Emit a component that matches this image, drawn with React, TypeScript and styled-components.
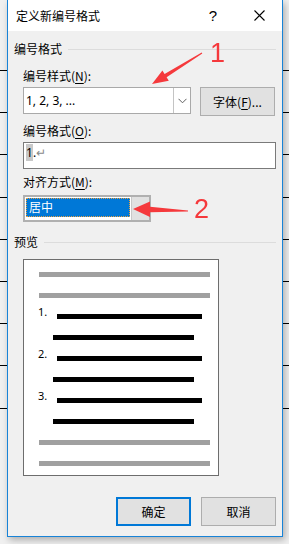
import React from 'react';
import styled, {createGlobalStyle} from 'styled-components';

const GlobalStyle = createGlobalStyle`
  html, body { margin: 0; padding: 0; }
  body {
    width: 289px; height: 544px; overflow: hidden;
    background-color: #f0f0f0;
    background-image: repeating-linear-gradient(to bottom, #000 0 1px, transparent 1px 42.2px);
    background-size: 100% 340px;
    background-position: 0 70px;
    background-repeat: no-repeat;
    font-family: "Noto Sans CJK SC", "Noto Sans", sans-serif;
    font-size: 12px;
    color: #000;
  }
  u { text-decoration-thickness: 1px; text-underline-offset: 2px; }
`;

const Dialog = styled.div`
  position: relative;
  margin-left: 7px;
  width: 276px; height: 537px;
  box-sizing: border-box;
  border: 1px solid #1883d7; border-top: none;
  background: #f0f0f0;
  box-shadow: 2px 3px 7px rgba(0, 0, 0, 0.28);
  display: flex; flex-direction: column;
`;

const TitleBar = styled.div`
  display: flex; align-items: center;
  height: 31px; background: #fff;
  padding-left: 8px;
  .title { flex: 1; line-height: 16px; }
`;

const TitleButton = styled.div`
  width: 46px; height: 31px;
  display: flex; align-items: center; justify-content: center;
  font-family: "Liberation Sans", sans-serif; font-size: 15px;
`;

const Body = styled.div`
  display: flex; flex-direction: column;
  padding: 10px 6px 0 6px;
`;

const GroupHeader = styled.div<{ $mt?: number }>`
  display: flex; align-items: center;
  margin-top: ${p => p.$mt ?? 0}px;
  line-height: 16px;
  &::after { content: ''; flex: 1; height: 1px; background: #dcdcdc; margin-left: 6px; }
`;

const Section = styled.div`
  display: flex; flex-direction: column;
  padding-left: 9px;
`;

const Label = styled.div<{ $mt: number }>`
  line-height: 16px;
  margin-top: ${p => p.$mt}px;
`;

const Row = styled.div`
  display: flex; align-items: flex-start; gap: 9px;
  margin-top: 3px; height: 28px;
`;

const Combo = styled.div`
  display: flex; box-sizing: border-box;
  width: 168px; height: 27px;
  border: 1px solid #a9a9a9; background: #fff;
  .value { flex: 1; padding-left: 2px; line-height: 25px; font-family: "Noto Sans", sans-serif; font-size: 12px; }
  .drop { width: 16px; border-left: 1px solid #c4c4c4; display: flex; align-items: center; justify-content: center; }
`;

const Button = styled.div<{ $primary?: boolean }>`
  box-sizing: border-box;
  width: 75px; height: 29px;
  display: flex; align-items: center; justify-content: center;
  background: #e1e1e1;
  border: ${p => (p.$primary ? '2px solid #0078d7' : '1px solid #adadad')};
`;

const TextInput = styled.div`
  box-sizing: border-box;
  margin-top: 3px; width: 253px; height: 27px;
  border: 1px solid #7a7a7a; background: #fff;
  padding: 1px 0 0 2px;
  font-family: "Noto Sans", sans-serif; font-size: 12px; line-height: 17px;
  .sel { background: #c8c8c8; }
  .mark { color: #8a8a8a; }
`;

const Select = styled.div`
  box-sizing: border-box;
  display: flex;
  margin-top: 5px; width: 128px; height: 27px;
  border: 2px solid #b0b0b0; background: #fff;
  .field { flex: 1; padding: 1px; }
  .chosen {
    box-sizing: border-box; height: 19px;
    background: #0078d7; color: #fff;
    border: 1px dotted #e8a040;
    padding-left: 2px; line-height: 16px;
  }
  .drop { width: 17px; background: #e1e1e1; border-left: 1px solid #c8c8c8; }
`;

const Preview = styled.div`
  box-sizing: border-box;
  margin-top: 9px; width: 196px; height: 217px;
  border: 1px solid #6d6d6d; background: #fff;
  padding: 12px 0 0 15px;
  display: flex; flex-direction: column; gap: 16px;
`;

const Bar = styled.div<{ $w: number; $ml?: number; $dark?: boolean }>`
  width: ${p => p.$w}px; height: 5px;
  margin-left: ${p => p.$ml ?? 0}px;
  background: ${p => (p.$dark ? '#000' : '#a0a0a0')};
`;

const NumRow = styled.div`
  display: flex; align-items: flex-start; height: 5px;
  .num {
    width: 19px; margin: -8px 0 0 -1px;
    font-family: "Noto Sans", sans-serif; font-size: 11px; line-height: 12px;
  }
`;

const Footer = styled.div`
  display: flex; gap: 10px; margin: 21px 0 0 102px;
`;

const Overlay = styled.svg`
  position: fixed; left: 0; top: 0;
  pointer-events: none;
`;

const Chevron = () => (
  <svg width="9" height="6" viewBox="0 0 9 6">
    <path d="M0.5 0.8 L4.5 4.8 L8.5 0.8" fill="none" stroke="#606060" strokeWidth="1" />
  </svg>
);

const CloseIcon = () => (
  <svg width="11" height="11" viewBox="0 0 11 11">
    <path d="M0.5 0.5 L10.5 10.5 M10.5 0.5 L0.5 10.5" stroke="#000" strokeWidth="1.1" />
  </svg>
);

const numbered = [1, 2, 3];

export default function App() {
  return (
    <>
      <GlobalStyle />
      <Dialog>
        <TitleBar>
          <span className="title">定义新编号格式</span>
          <TitleButton>?</TitleButton>
          <TitleButton><CloseIcon /></TitleButton>
        </TitleBar>
        <Body>
          <GroupHeader>编号格式</GroupHeader>
          <Section>
            <Label $mt={11}>编号样式(<u>N</u>):</Label>
            <Row>
              <Combo>
                <span className="value">1, 2, 3, ...</span>
                <span className="drop"><Chevron /></span>
              </Combo>
              <Button>字体(<u>F</u>)...</Button>
            </Row>
            <Label $mt={8}>编号格式(<u>O</u>):</Label>
            <TextInput><span className="sel">1</span>.<span className="mark">↵</span></TextInput>
            <Label $mt={5}>对齐方式(<u>M</u>):</Label>
            <Select>
              <div className="field"><div className="chosen">居中</div></div>
              <div className="drop" />
            </Select>
          </Section>
          <GroupHeader $mt={12}>预览</GroupHeader>
          <Section>
            <Preview>
              <Bar $w={171} />
              <Bar $w={171} />
              {numbered.map(n => (
                <React.Fragment key={n}>
                  <NumRow>
                    <span className="num">{n}.</span>
                    <Bar $w={145} $dark />
                  </NumRow>
                  <Bar $w={141} $ml={14} $dark />
                </React.Fragment>
              ))}
              <Bar $w={171} />
              <Bar $w={171} />
            </Preview>
          </Section>
          <Footer>
            <Button $primary>确定</Button>
            <Button>取消</Button>
          </Footer>
        </Body>
      </Dialog>
      <Overlay width="289" height="544" viewBox="0 0 289 544">
        <polygon
          points="202.3,53.4 166.6,77.3 168.8,80.7 152,84 162.4,70.5 164.6,73.9 201.7,52.6"
          fill="#f5393c"
        />
        <text x="210" y="62" fill="#f5393c" fontFamily="Liberation Sans, sans-serif" fontSize="27">1</text>
        <polygon
          points="188,210.6 150,206.8 150,201.5 133,209 150,217 150,212.2 188,211.4"
          fill="#f5393c"
        />
        <text x="194" y="218" fill="#f5393c" fontFamily="Liberation Sans, sans-serif" fontSize="27">2</text>
      </Overlay>
    </>
  );
}
